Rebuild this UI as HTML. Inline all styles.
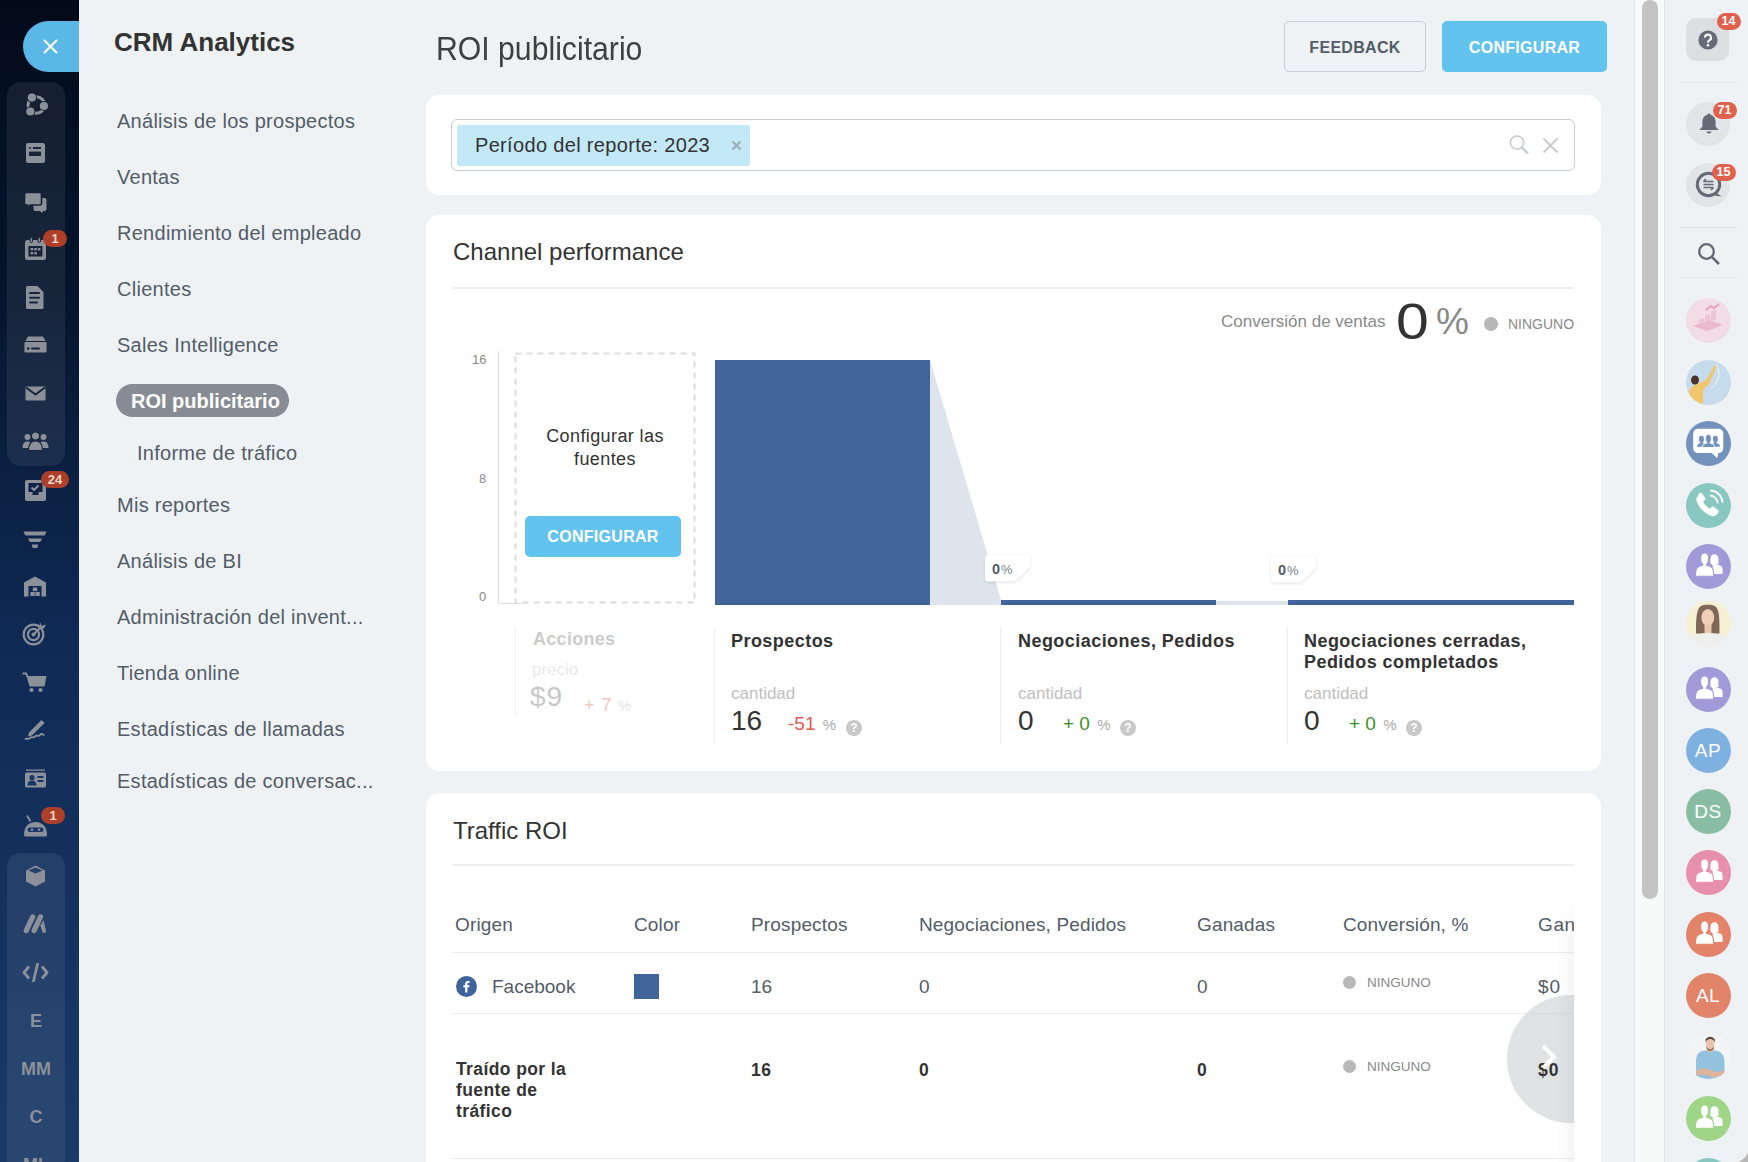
<!DOCTYPE html>
<html><head><meta charset="utf-8">
<style>
*{box-sizing:border-box;margin:0;padding:0}
html,body{width:1748px;height:1162px;overflow:hidden;background:#eef2f4;font-family:"Liberation Sans",sans-serif;color:#333}
.abs{position:absolute}
#lbar{position:absolute;left:0;top:0;width:79px;height:1162px;background:linear-gradient(180deg,#020b1a 0%,#06152d 25%,#0f2a55 55%,#1a3a68 100%)}
.grp{position:absolute;left:7px;width:58px;border-radius:14px;background:rgba(255,255,255,0.07)}
.ico{position:absolute;left:35px;transform:translate(-50%,-50%);fill:#8e939b;color:#8e939b}
.badge{position:absolute;height:17px;border-radius:9px;background:#ad3f28;color:#ecd5cb;font-weight:bold;font-size:13px;line-height:17px;text-align:center;padding:0 5px}
#close{position:absolute;left:23px;top:21px;width:56px;height:51px;background:#5bb7e5;border-radius:26px 0 0 26px}
.menu{position:absolute;left:117px;font-size:20px;letter-spacing:0.27px;color:#535c69;white-space:nowrap;transform:translateY(-50%)}
#sec h1{position:absolute;left:114px;top:27px;font-size:26px;font-weight:bold;color:#333}
.card{position:absolute;left:426px;width:1175px;background:#fff;border-radius:14px}
.txt{position:absolute;white-space:nowrap;line-height:1}
.ic{position:absolute;fill:#8b9099}
.ltr{position:absolute;left:36px;transform:translate(-50%,-50%);color:#8b9099;font-weight:bold;font-size:18px;line-height:1}
.pct{position:absolute;width:43px;height:27px;background:#fff;box-shadow:0 1px 4px rgba(0,0,0,0.12);border-radius:3px;font-size:11px;color:#8a8a8a;padding:6px 0 0 7px;line-height:1}
.pct b{font-size:15px;color:#535c69}
.qm{position:absolute;width:16px;height:16px;border-radius:50%;background:#c8c8c8;color:#fff;font-size:12px;font-weight:bold;text-align:center;line-height:16px}
.th{position:absolute;top:20px;font-size:19px;letter-spacing:0.15px;color:#535c69;white-space:nowrap;line-height:1}
.td{position:absolute;font-size:19px;color:#535c69;white-space:nowrap;line-height:1}
.tb{position:absolute;font-size:17.5px;letter-spacing:0.4px;font-weight:bold;color:#333;white-space:nowrap;line-height:1}
.rbadge{position:absolute;width:24px;height:17px;border-radius:9px;background:#e0614b;color:#fff;font-size:12.5px;font-weight:bold;line-height:17px;margin:0.5px 0 0 0.5px;text-align:center}
.av{position:absolute;left:1686px;width:45px;height:45px;border-radius:50%;overflow:hidden}
.sh{position:absolute;font-size:18px;font-weight:bold;color:#333;white-space:nowrap;line-height:21px;letter-spacing:0.45px}
.btn{position:absolute;border-radius:5px;font-weight:bold;font-size:16px;text-align:center;letter-spacing:0.3px}
</style></head><body>
<div id="lbar">
  <div id="close"><svg class="abs" style="left:20px;top:18px" width="15" height="15" viewBox="0 0 15 15"><path d="M1 1L14 14M14 1L1 14" stroke="#fff" stroke-width="2"/></svg></div>
  <div class="grp" style="top:82px;height:384px"></div>
  <div class="grp" style="top:853px;height:320px"></div>
  <svg class="ic" style="left:22px;top:91px" width="26" height="26" viewBox="0 0 26 26"><circle cx="14.3" cy="14" r="8.3" stroke="#8b9099" stroke-width="3" fill="none"/><circle cx="9.9" cy="6.6" r="5" fill="#18233a"/><circle cx="21.9" cy="15" r="5" fill="#18233a"/><circle cx="8.3" cy="20.5" r="5" fill="#18233a"/><circle cx="9.9" cy="6.6" r="4.1"/><circle cx="21.9" cy="15" r="4.1"/><circle cx="8.3" cy="20.5" r="4.1"/></svg>
  <svg class="ic" style="left:25px;top:142px" width="21" height="22" viewBox="0 0 21 22"><rect x="1" y="1" width="19" height="20" rx="2"/><rect x="4" y="9.6" width="12" height="4.4" fill="#18233a"/><circle cx="5" cy="6" r="1" fill="#18233a"/><rect x="8" y="5" width="8" height="2" fill="#18233a"/></svg>
  <svg class="ic" style="left:24px;top:192px" width="23" height="22" viewBox="0 0 23 22"><path d="M9.5 6h11a2 2 0 0 1 2 2v9a2 2 0 0 1-2 2h-1.5l-1 2-2-2H11.5a2 2 0 0 1-2-2z"/><path d="M2.5 0.5h13a2 2 0 0 1 2 2v8.5a2 2 0 0 1-2 2H6l-2.5 3v-3h-1a2 2 0 0 1-2-2V2.5a2 2 0 0 1 2-2z" stroke="#18233a" stroke-width="1.6"/></svg>
  <svg class="ic" style="left:24px;top:237px" width="23" height="24" viewBox="0 0 23 24"><rect x="1" y="3" width="21" height="20" rx="2.5"/><rect x="4.4" y="9" width="14" height="10.5" fill="#18233a"/><rect x="6" y="0.5" width="2.5" height="5" rx="1.2" stroke="#18233a" stroke-width="1"/><rect x="14" y="0.5" width="2.5" height="5" rx="1.2" stroke="#18233a" stroke-width="1"/><rect x="6.6" y="11" width="2.6" height="2.4"/><rect x="10.2" y="11" width="2.6" height="2.4"/><rect x="13.8" y="11" width="2.6" height="2.4"/><rect x="6.6" y="15" width="2.6" height="2.4"/><rect x="10.2" y="15" width="2.6" height="2.4"/></svg>
  <div class="badge" style="left:43px;top:230px;width:24px">1</div>
  <svg class="ic" style="left:25px;top:285px" width="20" height="25" viewBox="0 0 20 25"><path d="M2.5 1h10l6 6v15.5a1.5 1.5 0 0 1-1.5 1.5H2.5A1.5 1.5 0 0 1 1 22.5v-20A1.5 1.5 0 0 1 2.5 1z"/><rect x="4" y="7" width="11" height="2" rx="1" fill="#18233a"/><rect x="4" y="11.8" width="11" height="2" rx="1" fill="#18233a"/><rect x="4" y="16.5" width="9" height="2" rx="1" fill="#18233a"/></svg>
  <svg class="ic" style="left:23px;top:336px" width="25" height="18" viewBox="0 0 25 18"><path d="M5 0.5h15l4 7H1z"/><rect x="0.8" y="5.5" width="23.4" height="11.5" rx="1.5" stroke="#18233a" stroke-width="1.2"/><circle cx="5.2" cy="12.5" r="1.3" fill="#18233a"/><rect x="8" y="11.5" width="9" height="2" rx="1" fill="#18233a"/></svg>
  <svg class="ic" style="left:25px;top:386px" width="21" height="15" viewBox="0 0 21 15"><rect x="0.5" y="0.5" width="20" height="14" rx="1"/><path d="M1 1.5l9.5 7 9.5-7" stroke="#18233a" stroke-width="2" fill="none"/></svg>
  <svg class="ic" style="left:22px;top:431px" width="27" height="20" viewBox="0 0 27 20"><circle cx="5.5" cy="6" r="3"/><path d="M0.5 17c0-4.5 2-6.5 5-6.5s5 2 5 6.5z"/><circle cx="21.5" cy="6" r="3"/><path d="M16.5 17c0-4.5 2-6.5 5-6.5s5 2 5 6.5z"/><circle cx="13.5" cy="5" r="4.2" stroke="#18233a" stroke-width="1.2"/><path d="M6.5 19.5c0-6 2.5-9.5 7-9.5s7 3.5 7 9.5z" stroke="#18233a" stroke-width="1.2"/></svg>
  <svg class="ic" style="left:24px;top:478px" width="23" height="24" viewBox="0 0 23 24"><rect x="1" y="2" width="21" height="21" rx="2"/><path d="M4.5 5v9h4v3h6v-3h4V5z" fill="#102347"/><path d="M7.5 9.5l2.5 2.5 4.5-4.5" stroke="#8b9099" stroke-width="2" fill="none"/></svg>
  <div class="badge" style="left:41px;top:471px;width:28px">24</div>
  <svg class="ic" style="left:23px;top:531px" width="24" height="18" viewBox="0 0 24 18"><path d="M0.5 0.5h23l-1.8 4H2.3z"/><path d="M5 7.5h14l-1.8 3.5H6.8z"/><path d="M8.7 13.5h6.6l-1 3.5H9.7z"/></svg>
  <svg class="ic" style="left:23px;top:576px" width="24" height="21" viewBox="0 0 24 21"><path d="M12 0.5L1 6.5v14h4.5V10h13v10.5H23v-14z"/><rect x="9.8" y="11.5" width="4.4" height="3.6"/><rect x="7.4" y="16" width="4.4" height="4"/><rect x="12.4" y="16" width="4.4" height="4"/></svg>
  <svg class="ic" style="left:22px;top:620px" width="26" height="26" viewBox="0 0 26 26"><circle cx="11.5" cy="14.5" r="9.8" stroke="#8b9099" stroke-width="2.2" fill="none"/><circle cx="11.5" cy="14.5" r="5.6" stroke="#8b9099" stroke-width="2.2" fill="none"/><circle cx="11.5" cy="14.5" r="2"/><path d="M11.5 14.5L20 6" stroke="#8b9099" stroke-width="2.2"/><path d="M18 2l1.5 4L24 4.5l-2 4-4.5 0z"/></svg>
  <svg class="ic" style="left:22px;top:672px" width="25" height="21" viewBox="0 0 25 21"><path d="M0.5 1.5h3.5l1.5 3" stroke="#8b9099" stroke-width="2" fill="none"/><path d="M4.5 4h20l-2 10.5H7.5z"/><circle cx="9.5" cy="18" r="2.1"/><circle cx="18.5" cy="18" r="2.1"/></svg>
  <svg class="ic" style="left:23px;top:719px" width="24" height="22" viewBox="0 0 24 22"><path d="M18.5 1l3 3L9 16.5l-4 1 1-4z"/><path d="M2 20.5c2-2.5 3 1 5-1.5s3 1 5-1.5 3 1 5-1.5 2.5 .5 4.5-.5" stroke="#8b9099" stroke-width="1.9" fill="none"/></svg>
  <svg class="ic" style="left:24px;top:769px" width="23" height="19" viewBox="0 0 23 19"><rect x="2" y="0.5" width="19" height="1.3"/><rect x="1" y="3.5" width="21" height="15" rx="1.5"/><circle cx="8" cy="8.5" r="2.6" fill="#163563"/><path d="M3.5 16.5c0-3.5 2-5 4.5-5s4.5 1.5 4.5 5z" fill="#163563"/><rect x="13.5" y="7" width="6" height="2" fill="#163563"/><rect x="13.5" y="11" width="6" height="2" fill="#163563"/></svg>
  <svg class="ic" style="left:23px;top:815px" width="25" height="22" viewBox="0 0 25 22"><path d="M4 0.5l3.5 6" stroke="#8b9099" stroke-width="1.8"/><path d="M1 20c0-8 4.5-13 11.5-13S24 12 24 20a1.5 1.5 0 0 1-1.5 1.5h-20A1.5 1.5 0 0 1 1 20z"/><rect x="4.5" y="12.5" width="16" height="4.5" rx="2.2" fill="#183766"/><circle cx="9" cy="14.7" r="1.2" fill="#8b9099"/><circle cx="16" cy="14.7" r="1.2" fill="#8b9099"/></svg>
  <div class="badge" style="left:41px;top:807px;width:24px">1</div>
  <svg class="ic" style="left:25px;top:865px" width="21" height="22" viewBox="0 0 21 22"><path d="M10.5 0.5L20 5.5v11l-9.5 5-9.5-5v-11z"/><path d="M10.5 2.5L17.5 5.5 10.5 8.5 3.5 5.5z" fill="#223f68"/></svg>
  <svg class="ic" style="left:23px;top:914px" width="24" height="21" viewBox="0 0 24 21"><path d="M7.5 1.5a2.6 2.6 0 0 1 4.5 2.6L5.5 18a2.6 2.6 0 0 1-4.6-2.4z"/><path d="M15.3 1.5a2.6 2.6 0 0 1 4.5 2.6L13.3 18a2.6 2.6 0 0 1-4.6-2.4z"/><path d="M20.5 6l2.6 11a2 2 0 0 1-3.6 1.2l-2.2-6.7z"/></svg>
  <svg class="ic" style="left:22px;top:963px" width="27" height="19" viewBox="0 0 27 19"><path d="M7 3.5L2 9.5l5 6" stroke="#8b9099" stroke-width="2.8" fill="none" stroke-linejoin="round"/><path d="M20 3.5l5 6-5 6" stroke="#8b9099" stroke-width="2.8" fill="none" stroke-linejoin="round"/><path d="M15.5 1L11.5 18" stroke="#8b9099" stroke-width="2.8" stroke-linecap="round"/></svg>
  <div class="ltr" style="top:1021px">E</div>
  <div class="ltr" style="top:1069px">MM</div>
  <div class="ltr" style="top:1117px">C</div>
  <div class="ltr" style="top:1165px">ML</div>

</div>
<div id="sec">
  <h1>CRM Analytics</h1>
  <div class="menu" style="top:121px">Análisis de los prospectos</div>
  <div class="menu" style="top:177px">Ventas</div>
  <div class="menu" style="top:233px">Rendimiento del empleado</div>
  <div class="menu" style="top:289px">Clientes</div>
  <div class="menu" style="top:345px">Sales Intelligence</div>
  <div class="abs" style="left:116px;top:384px;width:173px;height:33px;border-radius:17px;background:#868b94"></div>
  <div class="menu" style="top:401px;left:131px;color:#fff;font-weight:bold;letter-spacing:0">ROI publicitario</div>
  <div class="menu" style="top:453px;left:137px">Informe de tráfico</div>
  <div class="menu" style="top:505px">Mis reportes</div>
  <div class="menu" style="top:561px">Análisis de BI</div>
  <div class="menu" style="top:617px">Administración del invent...</div>
  <div class="menu" style="top:673px">Tienda online</div>
  <div class="menu" style="top:729px">Estadísticas de llamadas</div>
  <div class="menu" style="top:781px">Estadísticas de conversac...</div>
</div>
<div id="main">
  <div class="txt" style="left:436px;top:32px;font-size:33px;color:#404040;transform:scaleX(0.915);transform-origin:left">ROI publicitario</div>
  <div class="btn" style="left:1284px;top:21px;width:142px;height:51px;border:1px solid #c6cdd3;color:#535c69;line-height:52px">FEEDBACK</div>
  <div class="btn" style="left:1442px;top:21px;width:165px;height:51px;background:#62c3ef;color:#fff;line-height:54px">CONFIGURAR</div>
  <div class="card" style="top:95px;height:100px"></div>
  <div class="abs" style="left:451px;top:119px;width:1124px;height:52px;border:1px solid #c9ced3;border-radius:6px"></div>
  <div class="abs" style="left:457px;top:125px;width:293px;height:41px;background:#c3e8f8;border-radius:2px"></div>
  <div class="txt" style="left:475px;top:135px;font-size:20px;letter-spacing:0.33px;color:#333">Período del reporte: 2023</div>
  <svg class="abs" style="left:731px;top:140px" width="11" height="11" viewBox="0 0 11 11"><path d="M1.5 1.5L9.5 9.5M9.5 1.5L1.5 9.5" stroke="#9cb2bd" stroke-width="2.4"/></svg>
  <svg class="abs" style="left:1509px;top:135px" width="21" height="21" viewBox="0 0 21 21"><circle cx="8" cy="7.5" r="6.6" stroke="#c6c9cb" stroke-width="1.5" fill="none"/><path d="M12.6 12.3L19 18.5" stroke="#c6c9cb" stroke-width="2.2"/></svg>
  <svg class="abs" style="left:1542px;top:137px" width="17" height="17" viewBox="0 0 17 17"><path d="M1.5 1.5L15.5 15.5M15.5 1.5L1.5 15.5" stroke="#c9cbcd" stroke-width="1.8"/></svg>

  <div class="card" style="top:215px;height:556px"></div>
  <div class="txt" style="left:453px;top:240px;font-size:24px;color:#333">Channel performance</div>
  <div class="abs" style="left:452px;top:287px;width:1122px;height:2px;background:#eeeeee"></div>
  <div class="txt" style="left:1221px;top:313px;font-size:17px;color:#8a8a8a">Conversión de ventas</div>
  <div class="txt" style="left:1396px;top:297px;font-size:50px;color:#333;transform:scaleX(1.18);transform-origin:left">0</div>
  <div class="txt" style="left:1436px;top:303px;font-size:37px;color:#8a8a8a">%</div>
  <div class="abs" style="left:1484px;top:317px;width:14px;height:14px;border-radius:50%;background:#b8b8b8"></div>
  <div class="txt" style="left:1508px;top:317px;font-size:14px;color:#8a8a8a">NINGUNO</div>
  <div class="txt" style="left:472px;top:353px;font-size:13px;color:#888">16</div>
  <div class="txt" style="left:479px;top:472px;font-size:13px;color:#888">8</div>
  <div class="txt" style="left:479px;top:590px;font-size:13px;color:#888">0</div>
  <div class="abs" style="left:498px;top:351px;width:1px;height:253px;background:#dddddd"></div>
  <div class="abs" style="left:498px;top:603px;width:24px;height:1px;background:#dddddd"></div>
  <svg class="abs" style="left:514px;top:352px" width="182" height="252" viewBox="0 0 182 252"><rect x="1.5" y="1.5" width="179" height="249" fill="none" stroke="#dcdcdc" stroke-width="2" stroke-dasharray="6 5"/></svg>
  <div class="txt" style="left:515px;top:425px;width:180px;text-align:center;font-size:18px;letter-spacing:0.4px;line-height:23px;white-space:normal;color:#333">Configurar las<br>fuentes</div>
  <div class="btn" style="left:525px;top:516px;width:156px;height:41px;background:#62c3ef;color:#fff;line-height:41px;font-size:16px">CONFIGURAR</div>
  <div class="abs" style="left:715px;top:360px;width:215px;height:245px;background:#40659a"></div>
  <svg class="abs" style="left:929px;top:359px" width="360" height="246" viewBox="0 0 360 246"><path d="M1 1L72 241H287V246H1z" fill="#dde4ec"/><rect x="72" y="241" width="215" height="5" fill="#40659a"/><rect x="287" y="242" width="72" height="4" fill="#dde4ec"/></svg>
  <div class="abs" style="left:1288px;top:600px;width:286px;height:5px;background:#40659a"></div>
  <svg class="abs" style="left:981px;top:551px;filter:drop-shadow(0.5px 1.5px 1.5px rgba(0,0,0,0.13))" width="56" height="36" viewBox="0 0 56 36"><path d="M7 4H49V16L34 30.5H7a3 3 0 0 1-3-3V7a3 3 0 0 1 3-3z" fill="#fff"/></svg><div class="txt" style="left:992px;top:562px;font-size:14.5px;font-weight:bold;color:#555b66">0<span style="font-size:13px;font-weight:normal;color:#7a7f88;margin-left:1px">%</span></div>
  <svg class="abs" style="left:1267px;top:552px;filter:drop-shadow(0.5px 1.5px 1.5px rgba(0,0,0,0.13))" width="56" height="36" viewBox="0 0 56 36"><path d="M7 4H49V16L34 30.5H7a3 3 0 0 1-3-3V7a3 3 0 0 1 3-3z" fill="#fff"/></svg><div class="txt" style="left:1278px;top:563px;font-size:14.5px;font-weight:bold;color:#555b66">0<span style="font-size:13px;font-weight:normal;color:#7a7f88;margin-left:1px">%</span></div>

  <div class="abs" style="left:515px;top:627px;width:1px;height:87px;background:#eeeeee"></div>
  <div class="abs" style="left:714px;top:627px;width:1px;height:117px;background:#eeeeee"></div>
  <div class="abs" style="left:1000px;top:627px;width:1px;height:117px;background:#eeeeee"></div>
  <div class="abs" style="left:1287px;top:627px;width:1px;height:117px;background:#eeeeee"></div>
  <div class="txt" style="left:533px;top:630px;letter-spacing:0.3px;font-size:18px;font-weight:bold;color:#cccccc">Acciones</div>
  <div class="txt" style="left:532px;top:661px;font-size:17px;color:#ebebeb">precio</div>
  <div class="txt" style="left:530px;top:683px;font-size:28px;letter-spacing:1px;color:#c8c8c8">$9</div>
  <div class="txt" style="left:584px;top:696px;font-size:18px;letter-spacing:1px;color:#f5c4bf">+ 7 <span style="font-size:14px;color:#e3e3e3">%</span></div>

  <div class="sh" style="left:731px;top:631px">Prospectos</div>
  <div class="txt" style="left:731px;top:683px;font-size:17px;color:#c0c0c0;margin-top:2px">cantidad</div>
  <div class="txt" style="left:731px;top:707px;font-size:28px;color:#333">16</div>
  <div class="txt" style="left:788px;top:714px;font-size:19px;color:#e05a4f">-51 <span style="font-size:15px;color:#aaa;margin-left:2px">%</span></div>
  <div class="qm" style="left:846px;top:720px">?</div>

  <div class="sh" style="left:1018px;top:631px">Negociaciones, Pedidos</div>
  <div class="txt" style="left:1018px;top:683px;font-size:17px;color:#c0c0c0;margin-top:2px">cantidad</div>
  <div class="txt" style="left:1018px;top:707px;font-size:28px;color:#333">0</div>
  <div class="txt" style="left:1063px;top:714px;font-size:19px;color:#3d8f2a">+ 0 <span style="font-size:15px;color:#aaa;margin-left:2px">%</span></div>
  <div class="qm" style="left:1120px;top:720px">?</div>

  <div class="sh" style="left:1304px;top:631px">Negociaciones cerradas,<br>Pedidos completados</div>
  <div class="txt" style="left:1304px;top:683px;font-size:17px;color:#c0c0c0;margin-top:2px">cantidad</div>
  <div class="txt" style="left:1304px;top:707px;font-size:28px;color:#333">0</div>
  <div class="txt" style="left:1349px;top:714px;font-size:19px;color:#3d8f2a">+ 0 <span style="font-size:15px;color:#aaa;margin-left:2px">%</span></div>
  <div class="qm" style="left:1406px;top:720px">?</div>

  <div class="card" style="top:793px;height:400px"></div>
  <div class="txt" style="left:453px;top:819px;font-size:24px;color:#333">Traffic ROI</div>
  <div class="abs" style="left:452px;top:864px;width:1122px;height:2px;background:#eeeeee"></div>
  <div class="abs" style="left:452px;top:895px;width:1122px;height:267px;overflow:hidden">
    <div class="th" style="left:3px">Origen</div>
    <div class="th" style="left:182px">Color</div>
    <div class="th" style="left:299px">Prospectos</div>
    <div class="th" style="left:467px">Negociaciones, Pedidos</div>
    <div class="th" style="left:745px">Ganadas</div>
    <div class="th" style="left:891px">Conversión, %</div>
    <div class="th" style="left:1086px;letter-spacing:0.6px">Ganancias</div>
    <div class="abs" style="left:0;top:57px;width:1122px;height:1px;background:#ececec"></div>
    <svg class="abs" style="left:4px;top:81px" width="21" height="21" viewBox="0 0 21 21"><circle cx="10.5" cy="10.5" r="10.5" fill="#3f639a"/><path d="M11.4 16.5v-5.3h1.8l.3-2h-2.1V7.9c0-.6.2-1 1-1h1.1V5.1c-.2 0-.9-.1-1.6-.1-1.6 0-2.7 1-2.7 2.8v1.4H7.4v2h1.8v5.3z" fill="#fff"/></svg>
    <div class="td" style="left:40px;top:82px">Facebook</div>
    <div class="abs" style="left:182px;top:79px;width:25px;height:25px;background:#40659a"></div>
    <div class="td" style="left:299px;top:82px">16</div>
    <div class="td" style="left:467px;top:82px">0</div>
    <div class="td" style="left:745px;top:82px">0</div>
    <div class="abs" style="left:891px;top:81px;width:13px;height:13px;border-radius:50%;background:#b8b8b8"></div>
    <div class="txt" style="left:915px;top:81px;font-size:13.5px;color:#8a8a8a">NINGUNO</div>
    <div class="td" style="left:1086px;top:82px;letter-spacing:1px">$0</div>
    <div class="abs" style="left:0;top:118px;width:1122px;height:1px;background:#ececec"></div>
    <div class="tb" style="left:4px;top:164px;line-height:21px">Traído por la<br>fuente de<br>tráfico</div>
    <div class="tb" style="left:299px;top:167px">16</div>
    <div class="tb" style="left:467px;top:167px">0</div>
    <div class="tb" style="left:745px;top:167px">0</div>
    <div class="abs" style="left:891px;top:165px;width:13px;height:13px;border-radius:50%;background:#b8b8b8"></div>
    <div class="txt" style="left:915px;top:165px;font-size:13.5px;color:#8a8a8a">NINGUNO</div>
    <div class="tb" style="left:1086px;top:167px;letter-spacing:1px;z-index:1">$0</div>
    <div class="abs" style="left:0;top:263px;width:1122px;height:1px;background:#ececec"></div>
    <div class="abs" style="left:1055px;top:100px;width:128px;height:128px;border-radius:50%;background:rgba(205,207,209,0.6);z-index:0"></div>
    <svg class="abs" style="left:1088px;top:148px;z-index:2" width="18" height="28" viewBox="0 0 18 28"><path d="M3 3L14 14 3 25" stroke="#fff" stroke-width="4" fill="none"/></svg>
  </div>
  <div class="abs" style="left:1556px;top:898px;width:18px;height:264px;background:linear-gradient(90deg,rgba(0,0,0,0),rgba(0,0,0,0.035));-webkit-mask-image:linear-gradient(180deg,transparent,#000 40px)"></div>

</div>
<div id="rbar">
  <div class="abs" style="left:1634px;top:0;width:1px;height:1162px;background:#e2e5e8"></div>
  <div class="abs" style="left:1635px;top:0;width:29px;height:1162px;background:#f8f9f9"></div>
  <div class="abs" style="left:1642px;top:0;width:16px;height:899px;border-radius:8px;background:#c3c3c3"></div>
  <div class="abs" style="left:1664px;top:0;width:1px;height:1162px;background:#e2e5e8"></div>
  <div class="abs" style="left:1686px;top:18px;width:43px;height:43px;border-radius:10px;background:#dcdfe2"></div>
  <svg class="abs" style="left:1698px;top:30px" width="20" height="20" viewBox="0 0 20 20"><circle cx="10" cy="10" r="9.6" fill="#656b76"/><path d="M7 7.6a3 3 0 1 1 4.3 2.7c-.9.5-1.3.9-1.3 1.9v.5" stroke="#fff" stroke-width="2.1" fill="none"/><circle cx="10" cy="15.3" r="1.3" fill="#fff"/></svg>
  <div class="rbadge" style="left:1716px;top:12px">14</div>
  <div class="abs" style="left:1680px;top:82px;width:57px;height:1px;background:#e2e5e8"></div>
  <div class="abs" style="left:1686px;top:102px;width:44px;height:44px;border-radius:50%;background:#e2e5e8"></div>
  <svg class="abs" style="left:1697px;top:112px" width="24" height="24" viewBox="0 0 24 24"><path d="M12 1.5c.9 0 1.4.6 1.4 1.3 3.4.7 5.2 3.3 5.2 7v4.8l3 3.4H2.4l3-3.4V9.8c0-3.7 1.8-6.3 5.2-7 0-.7.5-1.3 1.4-1.3z" fill="#656b76"/><path d="M9.6 19.5a2.4 2 0 0 0 4.8 0z" fill="#656b76"/></svg>
  <div class="rbadge" style="left:1712px;top:101px">71</div>
  <div class="abs" style="left:1686px;top:163px;width:44px;height:44px;border-radius:50%;background:#e2e5e8"></div>
  <svg class="abs" style="left:1694px;top:170px" width="30" height="30" viewBox="0 0 30 30"><circle cx="14.5" cy="14.5" r="11.2" stroke="#656b76" stroke-width="3" fill="none"/><path d="M22 22.5l5.5 4-6.5-.8z" fill="#656b76"/><path d="M9.5 11.5h10M9.5 11.5l2.5-2.5M19.5 17.5h-10M19.5 17.5l-2.5 2.5M9.5 14.5h10" stroke="#656b76" stroke-width="1.7" fill="none"/></svg>
  <div class="rbadge" style="left:1711px;top:163px">15</div>
  <div class="abs" style="left:1680px;top:227px;width:57px;height:1px;background:#e2e5e8"></div>
  <svg class="abs" style="left:1697px;top:242px" width="24" height="24" viewBox="0 0 24 24"><circle cx="9.5" cy="9.5" r="7.3" stroke="#656b76" stroke-width="2.3" fill="none"/><path d="M14.8 14.8L22 22" stroke="#656b76" stroke-width="2.6"/></svg>
  <div class="abs" style="left:1680px;top:277px;width:57px;height:1px;background:#e2e5e8"></div>
  <div class="av" style="top:298px;background:#f2dde6"><svg class="abs" style="left:0;top:0" width="44" height="44" viewBox="0 0 44 44"><path d="M7 28l16-6 14 5-16 6z" fill="#e9b8cb"/><path d="M13 27v-5l5-2v5zM19 25v-7l5-2v7zM25 23v-10l5-2v10z" fill="#eec3d3"/><path d="M20 12l5-4 3 2 5-4" stroke="#e7a2bd" stroke-width="2" fill="none"/></svg></div>
  <div class="av" style="top:360px;background:#c6dced"><svg class="abs" style="left:0;top:0" width="44" height="44" viewBox="0 0 44 44"><path d="M2 36c0-7 5-11 10-12l8-4 9-15 2 1-8 18-6 6v14H2z" fill="#f1c66a"/><ellipse cx="9" cy="20" rx="4" ry="4.5" fill="#4a3326"/><path d="M30 4c5 8 4 16-5 25" stroke="#eef5fa" stroke-width="1" fill="none"/></svg></div>
  <div class="av" style="top:421px;background:#7291bd"><svg class="abs" style="left:0;top:0" width="45" height="45" viewBox="0 0 45 45"><path d="M12 7.7h20.5a4.8 4.8 0 0 1 4.8 4.8v14.8a4.8 4.8 0 0 1-4.8 4.8h-.3l-.9 5.2-5.6-5.2H12a4.8 4.8 0 0 1-4.8-4.8V12.5A4.8 4.8 0 0 1 12 7.7z" fill="#fff"/><path d="M12.9 17.5a2.5 2.8 0 0 1 5 0v1.6c0 1.2-.6 2.2-1 2.5v.6l1.2.4-1.5 3.2h-5.6c.2-2 1-3 2.5-3.4l1-.3v-.5c-.5-.4-1.4-1.3-1.4-2.5z M26.9 17.5a2.5 2.8 0 0 1 5 0v1.6c0 1.2-.9 2.1-1.4 2.5v.5l1 .3c1.5.4 2.3 1.4 2.5 3.4h-5.6l-1.5-3.2 1.2-.4v-.6c-.4-.3-1-1.3-1-2.5z" fill="#7291bd"/><path d="M19.5 16.5a2.9 3.3 0 0 1 5.8 0v2c0 1.4-.7 2.4-1.2 2.8v.8l1.6.4c2 .5 2.9 1.5 3 4H16.3c.1-2.5 1-3.5 3-4l1.6-.4v-.8c-.5-.4-1.4-1.4-1.4-2.8z" fill="#7291bd" stroke="#fff" stroke-width="0.9"/></svg></div>
  <div class="av" style="top:483px;background:#88c8c1"><svg class="abs" style="left:0;top:0" width="44" height="44" viewBox="0 0 44 44"><path d="M13 10.5c1-1 2.3-1 3 0l3 4c.6.9.5 2-.3 2.7l-1.6 1.4c1.3 3 3.7 5.6 6.8 7.2l1.5-1.6c.7-.8 1.9-.9 2.7-.2l4 3c1 .8 1 2 0 3l-2 2c-1.2 1.2-3 1.5-4.6.9C18.5 30.5 13 25 10.5 18c-.5-1.5-.2-3.3 1-4.5z" fill="#fff"/><path d="M24.5 12.5a8 8 0 0 1 7 7M25 7.5a12.5 12.5 0 0 1 11.5 11.5" stroke="#fff" stroke-width="1.8" fill="none" stroke-linecap="round"/></svg></div>
  <div class="av" style="top:544px;background:#a29ad8"><svg class="abs" style="left:0;top:0" width="45" height="45" viewBox="0 0 45 45"><path d="M24.4 14.6a4.05 4.3 0 0 1 8.1 0v5.6h-1.8v1h-4.5v-1h-1.8z" fill="#fff"/><path d="M26.5 21.4l2-.5h3.7l2 .5c1.7.5 2.2 1.6 2.3 3.5l.2 5.2h-9.5z" fill="#fff"/><path d="M9.3 32.2l.7-6c.4-2.8 2.5-4 5-4.6l1.7-.4v-.8c-.9-.8-2-2.4-2-4.5v-2.5a3.9 4.5 0 0 1 7.8 0v2.5c0 2.1-1.1 3.7-2 4.5v.8l1.7.4c2.5.6 4.6 1.8 5 4.6l.7 6z" fill="#fff" stroke="#a29ad8" stroke-width="1.1"/></svg></div>
  <div class="av" style="top:601px;background:#f5efd3"><svg class="abs" style="left:0;top:0" width="45" height="45" viewBox="0 0 45 45"><path d="M10 32.5c0-10 0-21 3-25.5 2-3 5.5-3.2 8.8-3.2s7 .2 9 3.2c3 4.5 2.7 15.5 2.7 25.5z" fill="#7f6857"/><rect x="18.5" y="21" width="7" height="11" fill="#e9c8ad"/><ellipse cx="21.8" cy="16.5" rx="6.4" ry="8.6" fill="#efcfb6"/><path d="M1 45c1-8 8-13 21-13s20 5 21 13z" fill="#eff0ee"/></svg></div>
  <div class="av" style="top:667px;background:#a29ad8"><svg class="abs" style="left:0;top:0" width="45" height="45" viewBox="0 0 45 45"><path d="M24.4 14.6a4.05 4.3 0 0 1 8.1 0v5.6h-1.8v1h-4.5v-1h-1.8z" fill="#fff"/><path d="M26.5 21.4l2-.5h3.7l2 .5c1.7.5 2.2 1.6 2.3 3.5l.2 5.2h-9.5z" fill="#fff"/><path d="M9.3 32.2l.7-6c.4-2.8 2.5-4 5-4.6l1.7-.4v-.8c-.9-.8-2-2.4-2-4.5v-2.5a3.9 4.5 0 0 1 7.8 0v2.5c0 2.1-1.1 3.7-2 4.5v.8l1.7.4c2.5.6 4.6 1.8 5 4.6l.7 6z" fill="#fff" stroke="#a29ad8" stroke-width="1.1"/></svg></div>
  <div class="av" style="top:728px;background:#7eb0e0"><div style="position:absolute;left:0;top:0;width:44px;height:44px;line-height:45px;text-align:center;color:#fff;font-size:19px;letter-spacing:0.5px">AP</div></div>
  <div class="av" style="top:789px;background:#89bda3"><div style="position:absolute;left:0;top:0;width:44px;height:44px;line-height:45px;text-align:center;color:#fff;font-size:19px;letter-spacing:0.5px">DS</div></div>
  <div class="av" style="top:850px;background:#e98fae"><svg class="abs" style="left:0;top:0" width="45" height="45" viewBox="0 0 45 45"><path d="M24.4 14.6a4.05 4.3 0 0 1 8.1 0v5.6h-1.8v1h-4.5v-1h-1.8z" fill="#fff"/><path d="M26.5 21.4l2-.5h3.7l2 .5c1.7.5 2.2 1.6 2.3 3.5l.2 5.2h-9.5z" fill="#fff"/><path d="M9.3 32.2l.7-6c.4-2.8 2.5-4 5-4.6l1.7-.4v-.8c-.9-.8-2-2.4-2-4.5v-2.5a3.9 4.5 0 0 1 7.8 0v2.5c0 2.1-1.1 3.7-2 4.5v.8l1.7.4c2.5.6 4.6 1.8 5 4.6l.7 6z" fill="#fff" stroke="#e98fae" stroke-width="1.1"/></svg></div>
  <div class="av" style="top:912px;background:#e2836a"><svg class="abs" style="left:0;top:0" width="45" height="45" viewBox="0 0 45 45"><path d="M24.4 14.6a4.05 4.3 0 0 1 8.1 0v5.6h-1.8v1h-4.5v-1h-1.8z" fill="#fff"/><path d="M26.5 21.4l2-.5h3.7l2 .5c1.7.5 2.2 1.6 2.3 3.5l.2 5.2h-9.5z" fill="#fff"/><path d="M9.3 32.2l.7-6c.4-2.8 2.5-4 5-4.6l1.7-.4v-.8c-.9-.8-2-2.4-2-4.5v-2.5a3.9 4.5 0 0 1 7.8 0v2.5c0 2.1-1.1 3.7-2 4.5v.8l1.7.4c2.5.6 4.6 1.8 5 4.6l.7 6z" fill="#fff" stroke="#e2836a" stroke-width="1.1"/></svg></div>
  <div class="av" style="top:973px;background:#e2846a"><div style="position:absolute;left:0;top:0;width:44px;height:44px;line-height:45px;text-align:center;color:#fff;font-size:19px;letter-spacing:0.5px">AL</div></div>
  <div class="av" style="top:1034px;background:#f2f4f6"><svg class="abs" style="left:0;top:0" width="45" height="45" viewBox="0 0 45 45"><path d="M10 45V27c0-7 4-10.5 9-10.5h9c6 0 10 3.5 10.5 10.5V45z" fill="#93c2de"/><path d="M10.5 36.5c4-3 11-2 15 0s9 2 12-1l1 5.5c-4 3-12 3-16 1s-9-1-11.5 0z" fill="#dfb49b"/><rect x="21.5" y="13" width="5" height="5" fill="#e2b9a2"/><ellipse cx="24" cy="10" rx="4.3" ry="6" fill="#e8c4ae"/><path d="M19.6 9.5c0-6 9.2-6 9.2 0V5.5c-2-3.8-7.2-3.8-9.2 0z" fill="#5d4a3e"/><path d="M20.3 11.5c.5 5 7.3 5 7.8 0v2.5c-.7 3.8-7.1 3.8-7.8 0z" fill="#8d6d5a"/></svg></div>
  <div class="av" style="top:1096px;background:#9ed587"><svg class="abs" style="left:0;top:0" width="45" height="45" viewBox="0 0 45 45"><path d="M24.4 14.6a4.05 4.3 0 0 1 8.1 0v5.6h-1.8v1h-4.5v-1h-1.8z" fill="#fff"/><path d="M26.5 21.4l2-.5h3.7l2 .5c1.7.5 2.2 1.6 2.3 3.5l.2 5.2h-9.5z" fill="#fff"/><path d="M9.3 32.2l.7-6c.4-2.8 2.5-4 5-4.6l1.7-.4v-.8c-.9-.8-2-2.4-2-4.5v-2.5a3.9 4.5 0 0 1 7.8 0v2.5c0 2.1-1.1 3.7-2 4.5v.8l1.7.4c2.5.6 4.6 1.8 5 4.6l.7 6z" fill="#fff" stroke="#9ed587" stroke-width="1.1"/></svg></div>
  <div class="av" style="top:1158px;background:#88c8c1"></div>
</div>
<svg class="abs" style="left:1738px;top:1152px" width="10" height="10" viewBox="0 0 10 10"><path d="M10 0V10H0C4 9 9 4 10 0z" fill="#b8b8b8"/></svg>
</body></html>
